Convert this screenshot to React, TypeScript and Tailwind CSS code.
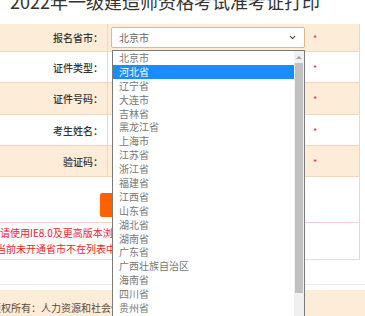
import { ChevronDown } from "lucide-react";

const rows = [
  { label: "报名省市：", cream: true, h: "h-[28px]", select: true },
  { label: "证件类型：", cream: false, h: "h-[31px]" },
  { label: "证件号码：", cream: true, h: "h-[32px]" },
  { label: "考生姓名：", cream: false, h: "h-[31px]" },
  { label: "验证码：", cream: true, h: "h-[31px]" },
];

const provinces = [
  "北京市",
  "河北省",
  "辽宁省",
  "大连市",
  "吉林省",
  "黑龙江省",
  "上海市",
  "江苏省",
  "浙江省",
  "福建省",
  "江西省",
  "山东省",
  "湖北省",
  "湖南省",
  "广东省",
  "广西壮族自治区",
  "海南省",
  "四川省",
  "贵州省",
  "云南省",
];

export default function App() {
  return (
    <div className="relative w-[365px] h-[316px] overflow-hidden bg-white font-['Noto_Sans_CJK_SC','Liberation_Sans',sans-serif]">
      <div className="h-[24px] overflow-hidden">
        <div className="-mt-[8px] pl-[10px] text-[18px] leading-[18px] text-[#333] whitespace-nowrap">
          2022年一级建造师资格考试准考证打印
        </div>
      </div>

      <div className="w-[360px] border-r border-[#f1d6ba]">
        {rows.map((r) => (
          <div
            key={r.label}
            className={`flex ${r.h} border-b border-[#f1d6ba] ${r.cream ? "bg-[#fdecd7]" : "bg-white"}`}
          >
            <div className="w-[108px] shrink-0 flex items-center justify-end pr-[4px] border-r border-[#f1d6ba] text-[10px] font-medium text-[#333]">
              {r.label}
            </div>
            <div className="flex-1 flex items-center pl-[3px]">
              <div className="w-[194px] h-[21px]">
                {r.select && (
                  <div className="h-full flex items-center justify-between px-[7px] bg-white border border-[#dcbb86] rounded-[2px] text-[10px] text-[#666]">
                    <span>北京市</span>
                    <ChevronDown className="w-[9px] h-[9px] text-[#444]" strokeWidth={3} />
                  </div>
                )}
              </div>
              <span className="ml-[8px] mt-[3px] text-[9px] text-[#e0303a]">*</span>
            </div>
          </div>
        ))}

        <div className="h-[46px] border-b border-[#f6cfcf] pt-[16px]">
          <div className="ml-[100px] w-[80px] h-[24px] rounded-[2px] bg-[#ff6100]" />
        </div>

        <div className="h-[37px] border-b border-[#f3dcd2] flex flex-col justify-center gap-[4px] text-[10px] leading-[12px] text-[#f0222a] whitespace-nowrap">
          <div>请使用IE8.0及更高版本浏览器，以保证正常打印</div>
          <div className="-ml-[4px]">当前未开通省市不在列表中显示</div>
        </div>
      </div>

      <div className="h-[24px]" />
      <div className="h-[6px] border-t border-[#f3e8dc]" />
      <div className="h-[30px] bg-[#fdecd7] pt-[12px] text-[10px] leading-[12px] text-[#5c4a38] whitespace-nowrap">
        <div className="-ml-[9px]">版权所有：人力资源和社会保障部人事考试中心</div>
      </div>

      <div className="absolute left-[112px] top-[50px] w-[193px] h-[290px] flex bg-white border border-[#7a7a7a]">
        <ul className="flex-1 text-[10px] text-[#777]">
          {provinces.map((p) => (
            <li
              key={p}
              className={`h-[13.9px] leading-[13.9px] pl-[6px] ${p === "河北省" ? "bg-[#1a8cff] text-white" : ""}`}
            >
              {p}
            </li>
          ))}
        </ul>
        <div className="w-[10px] flex flex-col bg-[#f0f0f0]">
          <div className="h-[12px] flex items-center justify-center">
            <div className="w-0 h-0 border-l-[3px] border-r-[3px] border-b-[3px] border-l-transparent border-r-transparent border-b-[#a0a0a0]" />
          </div>
          <div className="mx-[1px] h-[230px] bg-[#c1c1c1]" />
        </div>
      </div>
    </div>
  );
}
